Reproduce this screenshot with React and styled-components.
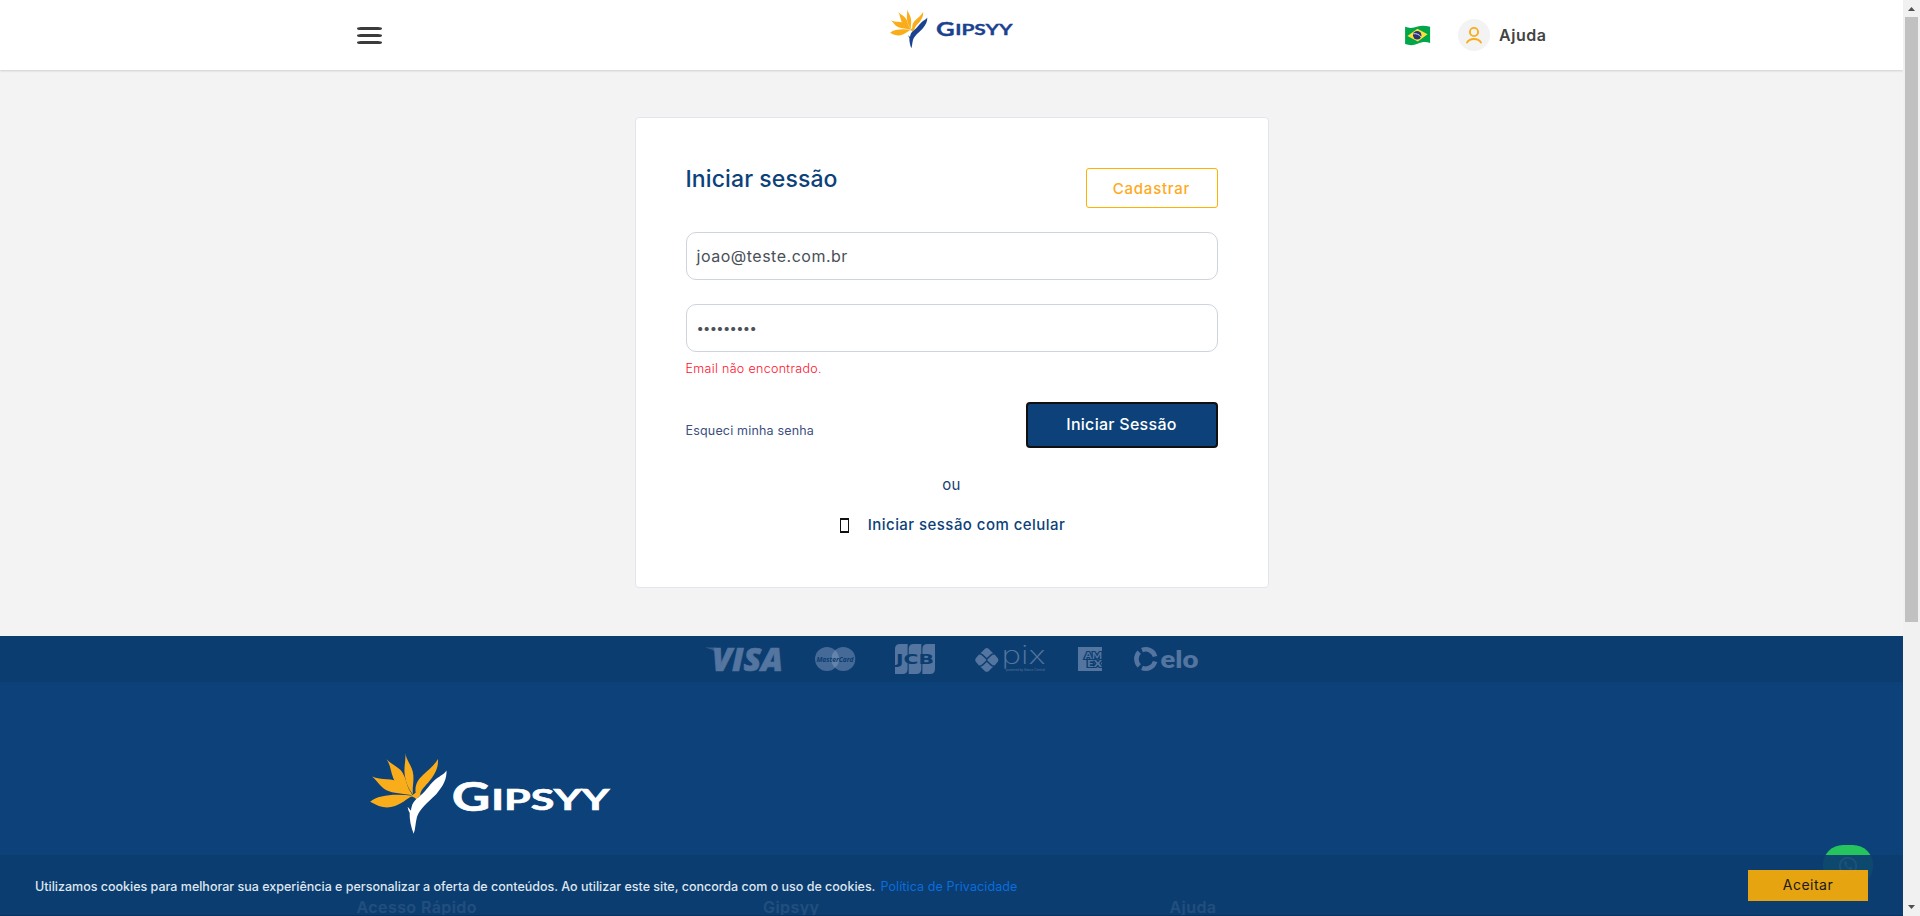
import React from "react";
import styled, { createGlobalStyle } from "styled-components";

const NAVY = "#0c4179";
const AMBER = "#f9ad1b";

const GlobalStyle = createGlobalStyle`
  *, *::before, *::after { box-sizing: border-box; }
  body { margin: 0; font-family: Inter, "Open Sans", sans-serif; background: #f3f3f3; }
  button, input { font-family: inherit; }
  svg { display: block; flex: none; overflow: visible; }
`;

const Viewport = styled.div`
  display: flex;
  width: 1920px;
  height: 916px;
  overflow: hidden;
`;

const Page = styled.div`
  position: relative;
  flex: 1;
  height: 916px;
  overflow: hidden;
  background: #f3f3f3;
`;

/* ---------- header ---------- */

const Header = styled.header`
  position: relative;
  height: 70px;
  background: #fff;
  box-shadow: 0 1px 2px rgba(0, 0, 0, 0.15);
`;

const HeaderInner = styled.div`
  display: grid;
  grid-template-columns: 1fr auto 1fr;
  width: 1190px;
  height: 70px;
  margin: 0 auto;
`;

const MenuButton = styled.button`
  display: flex;
  flex-direction: column;
  gap: 4px;
  width: 25px;
  margin-top: 27px;
  padding: 0;
  border: 0;
  background: none;
  align-self: start;
`;

const MenuBar = styled.span`
  height: 3px;
  background: #3b3b3b;
  border-radius: 4px / 1.5px;
`;

const HeaderLogo = styled.div`
  padding-top: 9px;
`;

const HeaderActions = styled.div`
  display: flex;
  justify-content: flex-end;
  align-items: center;
`;

const Avatar = styled.div`
  display: grid;
  place-items: center;
  width: 32px;
  height: 32px;
  margin: 0 9px 0 28px;
  border-radius: 50%;
  background: #f3f3f3;
`;

const HelpLink = styled.a`
  font-size: 16px;
  font-weight: 600;
  letter-spacing: 0.55px;
  line-height: 24px;
  color: #434343;
`;

/* ---------- login card ---------- */

const Main = styled.main`
  padding-top: 47px;
  height: 566px;
`;

const Card = styled.section`
  width: 634px;
  height: 471px;
  margin: 0 auto;
  padding: 50px 50px 0;
  border: 1px solid #e1e6ed;
  border-radius: 4px;
  background: #fff;
`;

const CardHead = styled.div`
  display: flex;
  justify-content: space-between;
  height: 40px;
  margin-bottom: 24px;
`;

const Title = styled.h1`
  margin: 0;
  font-size: 23px;
  font-weight: 500;
  letter-spacing: 0.1px;
  line-height: 23px;
  color: ${NAVY};
`;

const RegisterButton = styled.button`
  width: 132px;
  height: 40px;
  padding: 0;
  border: 1px solid #ffb000;
  border-radius: 3px;
  background: #fff;
  color: #ffa921;
  font-size: 15px;
  font-weight: 500;
  letter-spacing: 0.76px;
`;

const Field = styled.div`
  display: flex;
  align-items: center;
  height: 48px;
  margin-bottom: ${p => p.$gap}px;
  padding: 0 10px;
  border: 1px solid #ced4da;
  border-radius: 10px;
  color: #495057;
  font-size: ${p => (p.$masked ? 13 : 16)}px;
  letter-spacing: ${p => (p.$masked ? -0.7 : 0.51)}px;
`;

const ErrorText = styled.p`
  margin: 0 0 24px;
  font-size: 12.5px;
  font-weight: 300;
  letter-spacing: 0.32px;
  line-height: 18px;
  color: #ff0f2b;
`;

const SubmitRow = styled.div`
  display: flex;
  justify-content: space-between;
  height: 46px;
  margin-bottom: 25px;
`;

const ForgotLink = styled.a`
  padding-top: 20px;
  font-size: 12.5px;
  letter-spacing: 0.18px;
  line-height: 18px;
  color: #3c4f80;
`;

const SubmitButton = styled.button`
  width: 192px;
  height: 46px;
  padding: 0 0 2px;
  border: 2px solid #101010;
  border-radius: 4px;
  background: ${NAVY};
  color: #fff;
  font-size: 16px;
  font-weight: 500;
  letter-spacing: 0.28px;
`;

const Divider = styled.div`
  margin-bottom: 16px;
  text-align: center;
  font-size: 15px;
  letter-spacing: 0.2px;
  line-height: 24px;
  color: #1b3d70;
`;

const PhoneLogin = styled.a`
  display: flex;
  justify-content: center;
  align-items: center;
  gap: 19px;
  padding-left: 2px;
  font-size: 15px;
  font-weight: 500;
  letter-spacing: 0.45px;
  line-height: 24px;
  color: ${NAVY};
`;

const PhoneGlyph = styled.span`
  width: 9px;
  height: 15px;
  border: solid #111;
  border-width: 2px 1px;
`;

/* ---------- footer ---------- */

const Footer = styled.footer`
  height: 280px;
  background: ${NAVY};
`;

const Payments = styled.div`
  display: flex;
  justify-content: center;
  align-items: center;
  gap: 32px;
  height: 46px;
  background: #0c3d70;
`;

const FooterBody = styled.div`
  width: 1190px;
  margin: 0 auto;
  padding-top: 71px;
`;

const FooterLogo = styled.div`
  padding-left: 13px;
  margin-bottom: 61px;
`;

const FooterColumns = styled.div`
  display: grid;
  grid-template-columns: repeat(3, 406.5px);
`;

const ColumnTitle = styled.h2`
  margin: 0;
  font-size: 16px;
  font-weight: 600;
  letter-spacing: 0.42px;
  line-height: 24px;
  color: #fff;
`;

/* ---------- floating parts ---------- */

const WhatsApp = styled.div`
  position: absolute;
  right: 30px;
  bottom: 30px;
  display: grid;
  place-items: center;
  width: 50px;
  height: 41px;
  border-radius: 20px;
  background: #25c45f;
`;

const CookieBar = styled.div`
  position: absolute;
  left: 0;
  right: 0;
  bottom: 0;
  display: flex;
  align-items: center;
  height: 61px;
  padding: 0 35px 0 35px;
  background: rgba(11, 60, 112, 0.91);
  border-bottom: 1px solid #0a3364;
`;

const CookieText = styled.p`
  flex: 1;
  margin: 4px 0 0;
  font-size: 12.5px;
  font-weight: 500;
  line-height: 18px;
  color: #dfe6ee;
`;

const PolicyLink = styled.a`
  margin-left: 5px;
  font-weight: 400;
  letter-spacing: 0.11px;
  color: #0a6edb;
`;

const AcceptButton = styled.button`
  width: 120px;
  height: 31px;
  padding: 0 0 2px;
  border: 0;
  background: rgba(248, 172, 8, 0.92);
  color: #191919;
  font-size: 14px;
  letter-spacing: 0.5px;
`;

const Scrollbar = styled.div`
  display: flex;
  flex-direction: column;
  align-items: center;
  width: 17px;
  height: 916px;
  background: #f1f1f1;
`;

const ScrollArrow = styled.div`
  display: grid;
  place-items: center;
  height: 17px;
  transform: ${p => (p.$down ? "rotate(180deg)" : "none")};
`;

const Thumb = styled.div`
  width: 13px;
  height: 605px;
  margin-bottom: auto;
  background: #c1c1c1;
`;

/* ---------- drawings ---------- */

function Brand({ width, height, color, spread = 0, lift = 0 }) {
  return (
    <svg width={width} height={height} viewBox={`60 68 ${722 + spread} 244`}>
      <g fill={AMBER}>
        <path d="M60 215C86 192 139 190 190 197C168 204 158 224 123 231C101 235 83 228 60 215Z" />
        <path d="M66 139C92 151 130 143 151 157C169 169 178 181 188 195C159 190 129 190 109 180C88 169 82 152 66 139Z" />
        <path d="M109 87C125 104 147 109 158 128C171 150 169 169 185 190C163 181 139 168 130 145C121 123 122 104 109 87Z" />
        <path d="M166 68C168 90 188 108 190 134C192 158 186 172 189 193C176 176 167 158 164 132C161 108 168 91 166 68Z" />
        <path d="M264 86C267 114 252 137 235 157C223 170 210 184 211 195L199 207C194 202 188 199 182 198L197 188C194 165 203 149 219 134C236 119 252 107 264 86Z" />
      </g>
      <path fill={color} d="M290 121C291 146 281 167 259 192C233 218 209 235 201 261C196 279 197 297 191 311C183 292 178 267 179 248C175 242 174 236 173 230L183 242C185 222 191 212 206 201C227 185 236 167 253 151C267 138 281 135 290 121Z" />
      <g fill={color} stroke={color} strokeWidth="2" fontFamily="Lato, sans-serif" fontWeight="700">
        <text x={306 + spread} y={242 - lift} fontSize="119" textLength="116" lengthAdjust="spacingAndGlyphs">G</text>
        <text x={425 + spread} y={240 - lift} fontSize="88" textLength="356" lengthAdjust="spacingAndGlyphs">IPSYY</text>
      </g>
    </svg>
  );
}

function BrazilFlag() {
  return (
    <svg width="26" height="20" viewBox="0 0 26 20">
      <g transform="translate(.6 .6)">
        <path fill="#00a64b" d="M.5 1.2C5 3 9 2.3 13 .9S21 0 25.500 1.200V17.400C21 15.800 17 16.500 13 18.200S5 20 .5 18.400Z" />
        <path fill="#fee034" d="M2.800 10.500L12.800 3.200L23 8.600L13.200 16Z" />
        <circle cx="12.600" cy="9.600" r="4.200" fill="#29337a" />
        <path d="M8.800 8.200C11.600 7.700 14.600 8.900 16.500 11.300" stroke="#dfe4ee" strokeWidth="1" fill="none" />
      </g>
    </svg>
  );
}

function UserIcon() {
  return (
    <svg width="18" height="18" viewBox="0 0 18 18" fill="none" stroke={AMBER} strokeWidth="1.9" strokeLinecap="round">
      <circle cx="9" cy="6" r="4.100" />
      <path d="M2 16.400C4.800 11.900 13.200 11.900 16 16.400" />
    </svg>
  );
}

const MARK = "#53759f";

function Visa() {
  return (
    <svg width="78" height="24" viewBox="0 0 78 24">
      <path d="M0 .5H10C12 .8 13 2 13.500 4L15 10C12 5 7 2 0 .5Z" fill={MARK} opacity=".6" />
      <text x="7" y="23.500" fontFamily="Open Sans, sans-serif" fontStyle="italic" fontWeight="800" fontSize="32.500" textLength="71" lengthAdjust="spacingAndGlyphs" fill={MARK} stroke={MARK} strokeWidth=".7">VISA</text>
    </svg>
  );
}

function MasterCard() {
  return (
    <svg width="48" height="24" viewBox="0 0 48 24">
      <circle cx="12" cy="12" r="12" fill="#456a98" />
      <circle cx="28.300" cy="12" r="12" fill="#456a98" />
      <path d="M20.150 3.200A12 12 0 0 1 20.150 20.800A12 12 0 0 1 20.150 3.200Z" fill="#6584ab" />
      <text x="1.500" y="14.700" fontFamily="Open Sans, sans-serif" fontStyle="italic" fontWeight="700" fontSize="7.500" textLength="37" lengthAdjust="spacingAndGlyphs" fill="#0c3d70">MasterCard</text>
    </svg>
  );
}

function Jcb() {
  return (
    <svg width="48" height="30" viewBox="0 0 48 30">
      {[0, 13.7, 27.4].map(x => (
        <path key={x} transform={`translate(${x} 0)`} fill={MARK} d="M5 0H12.600V25Q12.600 30 7.600 30H0V5Q0 0 5 0Z" />
      ))}
      <text x="1" y="19.700" fontFamily="DejaVu Sans, sans-serif" fontWeight="700" fontSize="13.500" textLength="38" lengthAdjust="spacingAndGlyphs" fill="#0c3d70">JCB</text>
    </svg>
  );
}

function Pix() {
  return (
    <svg width="71" height="26" viewBox="0 0 71 26">
      <g fill={MARK}>
        <path d="M5.500 7.300L10 2.800Q11.800 1.200 13.600 2.800L18.100 7.300Q16.500 7.500 15.500 8.500L11.800 12L8.100 8.500Q7 7.500 5.500 7.300Z" />
        <path d="M5.500 20.700L10 25.200Q11.800 26.500 13.600 25.200L18.100 20.700Q16.500 20.500 15.500 19.500L11.800 16L8.100 19.500Q7 20.500 5.500 20.700Z" />
        <path d="M4 8.500Q6 8.500 7 9.500L11 13.300Q11.600 14 11 14.700L7 18.500Q6 19.500 4 19.500L.8 15.800Q-.6 14 .8 12.200Z" />
        <path d="M19.600 8.500Q17.600 8.500 16.600 9.500L12.600 13.300Q12 14 12.600 14.700L16.600 18.500Q17.600 19.500 19.600 19.500L22.800 15.800Q24.200 14 22.800 12.200Z" />
        <text x="26.500" y="18" fontFamily="Inter, sans-serif" fontWeight="200" fontSize="25" textLength="44" lengthAdjust="spacingAndGlyphs">pix</text>
        <text x="31" y="24.500" fontFamily="Inter, sans-serif" fontSize="3.200" textLength="39" lengthAdjust="spacingAndGlyphs">powered by Banco Central</text>
      </g>
    </svg>
  );
}

function Amex() {
  return (
    <svg width="24" height="24" viewBox="0 0 24 24">
      <rect width="24" height="24" fill={MARK} />
      <g fontFamily="Lato, sans-serif" fontWeight="900" fontSize="8.800" fill={MARK} stroke="#0c3d70" strokeWidth="2.200" paintOrder="stroke">
        <text x="6.500" y="11.500" textLength="17.500" lengthAdjust="spacingAndGlyphs">AM</text>
        <text x="9" y="19.500" textLength="15" lengthAdjust="spacingAndGlyphs">EX</text>
      </g>
    </svg>
  );
}

function Elo() {
  return (
    <svg width="64" height="24" viewBox="0 0 64 24">
      <g fill="none" stroke={MARK} strokeWidth="4.600">
        <path d="M8 3.100A9.700 9.700 0 0 1 21.100 9.500" />
        <path d="M21.100 14.500A9.700 9.700 0 0 1 8 20.900" />
        <path d="M5.200 18.800A9.700 9.700 0 0 1 5.200 5.200" />
      </g>
      <text x="26.500" y="20.500" fontFamily="Lato, sans-serif" fontWeight="800" fontSize="24" textLength="38" lengthAdjust="spacingAndGlyphs" fill={MARK}>elo</text>
    </svg>
  );
}

function WhatsAppIcon() {
  return (
    <svg width="20" height="20" viewBox="0 0 20 20" fill="none" stroke="#fff" strokeWidth="1.800">
      <path d="M1.600 18.400L2.800 14A8.200 8.200 0 1 1 6 17.200Z" />
      <path d="M6.800 5.600C5 8.400 10.500 14.600 13.800 13.200C15 12.600 14.400 11.700 12.500 11L11.200 12C9.500 11.200 8.500 10 8 8.800L8.800 7.600L8 5.600Z" fill="#fff" strokeWidth=".5" />
    </svg>
  );
}

function Arrow() {
  return (
    <svg width="7" height="4" viewBox="0 0 7 4"><path d="M0 4L3.500 0L7 4Z" fill="#505050" /></svg>
  );
}

export default function App() {
  return (
    <>
      <GlobalStyle />
      <Viewport>
        <Page>
          <Header>
            <HeaderInner>
              <MenuButton aria-label="Menu"><MenuBar /><MenuBar /><MenuBar /></MenuButton>
              <HeaderLogo><Brand width={123} height={39.4} color="#1b4191" spread={38} lift={9} /></HeaderLogo>
              <HeaderActions>
                <BrazilFlag />
                <Avatar><UserIcon /></Avatar>
                <HelpLink>Ajuda</HelpLink>
              </HeaderActions>
            </HeaderInner>
          </Header>

          <Main>
            <Card>
              <CardHead>
                <Title>Iniciar sessão</Title>
                <RegisterButton>Cadastrar</RegisterButton>
              </CardHead>
              <Field $gap={24}>joao@teste.com.br</Field>
              <Field $gap={8} $masked>•••••••••</Field>
              <ErrorText>Email não encontrado.</ErrorText>
              <SubmitRow>
                <ForgotLink>Esqueci minha senha</ForgotLink>
                <SubmitButton>Iniciar Sessão</SubmitButton>
              </SubmitRow>
              <Divider>ou</Divider>
              <PhoneLogin><PhoneGlyph />Iniciar sessão com celular</PhoneLogin>
            </Card>
          </Main>

          <Footer>
            <Payments><Visa /><MasterCard /><Jcb /><Pix /><Amex /><Elo /></Payments>
            <FooterBody>
              <FooterLogo><Brand width={240} height={81} color="#fff" /></FooterLogo>
              <FooterColumns>
                <ColumnTitle>Acesso Rápido</ColumnTitle>
                <ColumnTitle>Gipsyy</ColumnTitle>
                <ColumnTitle>Ajuda</ColumnTitle>
              </FooterColumns>
            </FooterBody>
          </Footer>

          <WhatsApp><WhatsAppIcon /></WhatsApp>
          <CookieBar>
            <CookieText>
              Utilizamos cookies para melhorar sua experiência e personalizar a oferta de conteúdos. Ao utilizar este site, concorda com o uso de cookies.
              <PolicyLink>Política de Privacidade</PolicyLink>
            </CookieText>
            <AcceptButton>Aceitar</AcceptButton>
          </CookieBar>
        </Page>
        <Scrollbar>
          <ScrollArrow><Arrow /></ScrollArrow>
          <Thumb />
          <ScrollArrow $down><Arrow /></ScrollArrow>
        </Scrollbar>
      </Viewport>
    </>
  );
}
